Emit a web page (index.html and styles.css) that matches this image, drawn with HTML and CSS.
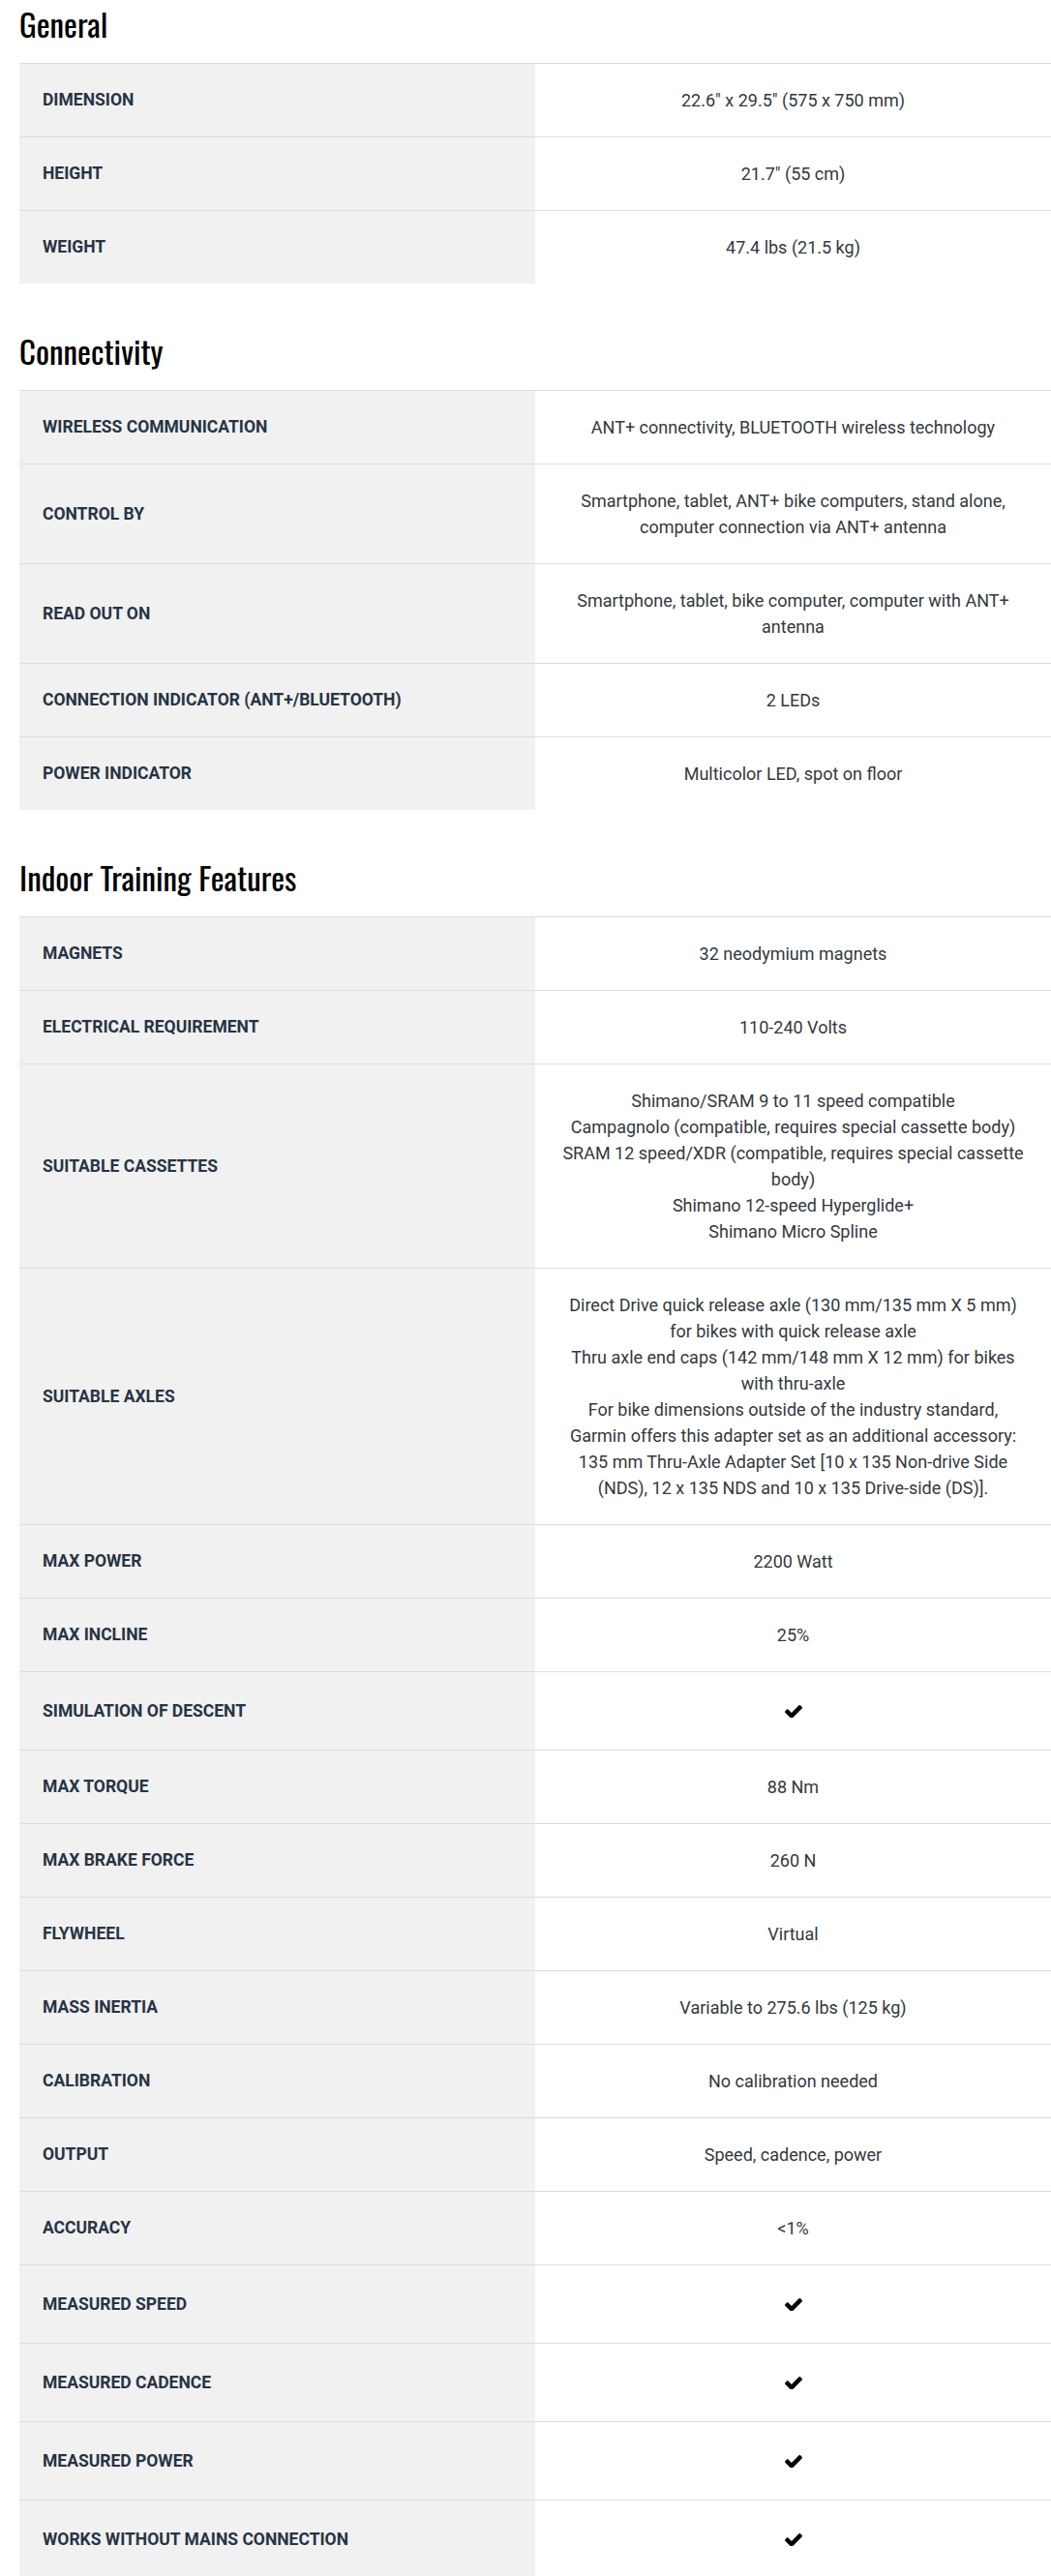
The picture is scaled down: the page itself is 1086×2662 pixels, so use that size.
FILE: index.html
```html
<!DOCTYPE html>
<html lang="en">
<head>
<meta charset="utf-8">
<title>Specifications</title>
<link rel="stylesheet" href="styles.css">
</head>
<body>
<svg width="0" height="0" class="defs" aria-hidden="true">
  <symbol id="check" viewBox="121 362 1550 1060">
    <path d="M1671 566q0 40-28 68l-724 724-136 136q-28 28-68 28t-68-28l-136-136-362-362q-28-28-28-68t28-68l136-136q28-28 68-28t68 28l294 295 656-657q28-28 68-28t68 28l136 136q28 28 28 68z"/>
  </symbol>
</svg>
<main class="specs">
  <section class="spec-section first">
    <h2 class="spec-title">General</h2>
    <table class="spec-table">
      <tr><th>DIMENSION</th><td>22.6" x 29.5" (575 x 750 mm)</td></tr>
      <tr><th>HEIGHT</th><td>21.7" (55 cm)</td></tr>
      <tr><th>WEIGHT</th><td>47.4 lbs (21.5 kg)</td></tr>
    </table>
  </section>

  <section class="spec-section">
    <h2 class="spec-title">Connectivity</h2>
    <table class="spec-table">
      <tr><th>WIRELESS COMMUNICATION</th><td>ANT+ connectivity, BLUETOOTH wireless technology</td></tr>
      <tr><th>CONTROL BY</th><td>Smartphone, tablet, ANT+ bike computers, stand alone, computer connection via ANT+ antenna</td></tr>
      <tr><th>READ OUT ON</th><td>Smartphone, tablet, bike computer, computer with ANT+ antenna</td></tr>
      <tr><th>CONNECTION INDICATOR (ANT+/BLUETOOTH)</th><td>2 LEDs</td></tr>
      <tr><th>POWER INDICATOR</th><td>Multicolor LED, spot on floor</td></tr>
    </table>
  </section>

  <section class="spec-section">
    <h2 class="spec-title">Indoor Training Features</h2>
    <table class="spec-table">
      <tr><th>MAGNETS</th><td>32 neodymium magnets</td></tr>
      <tr><th>ELECTRICAL REQUIREMENT</th><td>110-240 Volts</td></tr>
      <tr><th>SUITABLE CASSETTES</th><td>Shimano/SRAM 9 to 11 speed compatible<br>Campagnolo (compatible, requires special cassette body)<br>SRAM 12 speed/XDR (compatible, requires special cassette body)<br>Shimano 12-speed Hyperglide+<br>Shimano Micro Spline</td></tr>
      <tr><th>SUITABLE AXLES</th><td>Direct Drive quick release axle (130 mm/135 mm X 5 mm) for bikes with quick release axle<br>Thru axle end caps (142 mm/148 mm X 12 mm) for bikes with thru-axle<br>For bike dimensions outside of the industry standard, Garmin offers this adapter set as an additional accessory: 135 mm Thru-Axle Adapter Set [10 x 135 Non-drive Side (NDS), 12 x 135 NDS and 10 x 135 Drive-side (DS)].</td></tr>
      <tr><th>MAX POWER</th><td>2200 Watt</td></tr>
      <tr><th>MAX INCLINE</th><td>25%</td></tr>
      <tr><th>SIMULATION OF DESCENT</th><td><span class="check"><svg class="check-icon"><use href="#check"/></svg></span></td></tr>
      <tr><th>MAX TORQUE</th><td>88 Nm</td></tr>
      <tr><th>MAX BRAKE FORCE</th><td>260 N</td></tr>
      <tr><th>FLYWHEEL</th><td>Virtual</td></tr>
      <tr><th>MASS INERTIA</th><td>Variable to 275.6 lbs (125 kg)</td></tr>
      <tr><th>CALIBRATION</th><td>No calibration needed</td></tr>
      <tr><th>OUTPUT</th><td>Speed, cadence, power</td></tr>
      <tr><th>ACCURACY</th><td>&lt;1%</td></tr>
      <tr><th>MEASURED SPEED</th><td><span class="check"><svg class="check-icon"><use href="#check"/></svg></span></td></tr>
      <tr><th>MEASURED CADENCE</th><td><span class="check"><svg class="check-icon"><use href="#check"/></svg></span></td></tr>
      <tr><th>MEASURED POWER</th><td><span class="check"><svg class="check-icon"><use href="#check"/></svg></span></td></tr>
      <tr><th>WORKS WITHOUT MAINS CONNECTION</th><td><span class="check"><svg class="check-icon"><use href="#check"/></svg></span></td></tr>
    </table>
  </section>
</main>
</body>
</html>
```
FILE: styles.css
```css
html, body {
  margin: 0;
  padding: 0;
  background: #ffffff;
}

body {
  font-family: Roboto, "Liberation Sans", Arial, sans-serif;
  font-size: 18px;
  color: #333840;
}

.defs {
  position: absolute;
  width: 0;
  height: 0;
  overflow: hidden;
}

.specs {
  padding-left: 20px;
}

.spec-section {
  margin-top: 50px;
}

.spec-section.first {
  margin-top: 0;
  padding-top: 5px;
}

.spec-title {
  margin: 0 0 20px 0;
  font-family: "Oswald", "Liberation Sans Narrow", "DejaVu Sans Condensed", sans-serif;
  font-weight: 400;
  font-size: 33px;
  line-height: 40px;
  color: #000000;
}

.spec-table {
  width: 100%;
  border-collapse: collapse;
  table-layout: fixed;
}

.spec-table th,
.spec-table td {
  width: 50%;
  border-top: 1px solid #dddddd;
  padding: 24px;
  line-height: 27px;
  vertical-align: middle;
}

.spec-table th {
  background: #f1f1f1;
  text-align: left;
  font-size: 17.5px;
  font-weight: 700;
  color: #263445;
}

.spec-table td {
  text-align: center;
  font-size: 18px;
  font-weight: 400;
  color: #333840;
}

.check {
  display: flex;
  height: 32px;
  align-items: center;
  justify-content: center;
}

.check-icon {
  width: 18px;
  height: 13px;
  fill: #000000;
}
```
